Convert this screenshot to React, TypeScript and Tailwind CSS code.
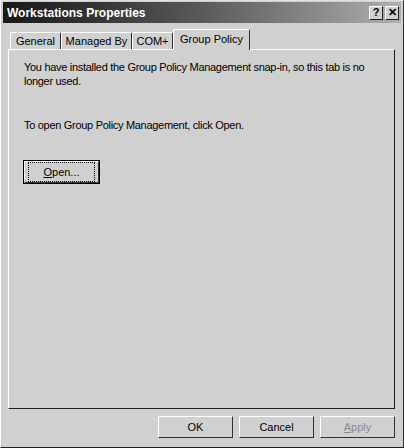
import React from "react";

const font = { fontFamily: '"Liberation Sans", Arial, sans-serif' };

const tabs = [
  { t: "General", w: "w-[51px]" },
  { t: "Managed By", w: "w-[71px]" },
  { t: "COM+", w: "w-[41px]" },
  { t: "Group Policy", w: "w-[77px]" },
];

function TitleButton({ children }: { children: React.ReactNode }) {
  return (
    <div className="w-[14px] h-[14px] bg-[#d0d0d0] border border-t-white border-l-white border-r-[#202020] border-b-[#202020] flex items-center justify-center text-[11px] font-bold leading-none text-black">
      {children}
    </div>
  );
}

function DlgButton({
  label,
  accel,
  disabled,
  focused,
}: {
  label: string;
  accel?: number;
  disabled?: boolean;
  focused?: boolean;
}) {
  const text =
    accel === undefined ? (
      label
    ) : (
      <>
        {label.slice(0, accel)}
        <span className="underline">{label[accel]}</span>
        {label.slice(accel + 1)}
      </>
    );
  return (
    <div
      className={
        "w-[75px] h-[22px] bg-[#d0d0d0] border border-t-white border-l-white border-r-[#303030] border-b-[#303030] flex items-center justify-center text-[11px] " +
        (focused ? "outline outline-1 outline-black " : "") +
        (disabled ? "text-[#8a8a8a]" : "text-black")
      }
    >
      {focused ? (
        <span className="px-[14px] py-[1px] border border-dotted border-black">{text}</span>
      ) : (
        <span>{text}</span>
      )}
    </div>
  );
}

export default function App() {
  return (
    <div style={font} className="w-[404px] h-[448px] bg-[#d0d0d0] flex flex-col border border-t-[#e0e0e0] border-l-white border-r-[#303030] border-b-[#202020] overflow-hidden">
      <div className="h-[21px] mx-[2px] mt-[1px] flex items-center pl-[4px] pr-[2px] bg-gradient-to-r from-[#181818] via-[#5a5a5a] to-[#b0b0b0]">
        <span className="text-white font-bold text-[12px] flex-1">Workstations Properties</span>
        <div className="flex gap-[2px]">
          <TitleButton>?</TitleButton>
          <TitleButton>✕</TitleButton>
        </div>
      </div>

      <div className="flex-1 flex flex-col pl-[7px] pr-[8px] pt-[5px]">
        <div className="flex items-end h-[22px] pl-[2px]">
          {tabs.map(({ t, w }, i) => {
            const sel = i === tabs.length - 1;
            return (
              <div
                key={t}
                className={
                  w +
                  " text-[11px] text-black border-t border-l border-t-white border-l-white border-r border-r-[#303030] rounded-t-[2px] flex items-center justify-center " +
                  (sel ? "h-[21px] relative z-10 bg-[#d0d0d0] pb-[2px]" : "h-[18px]")
                }
              >
                {t}
              </div>
            );
          })}
        </div>
        <div className="h-[360px] -mt-[1px] border border-t-white border-l-white border-r-[#202020] border-b-[#202020] px-[15px] pt-[10px] text-[11px] text-black tracking-[-0.3px]">
          <p className="leading-[14px] whitespace-nowrap">
            You have installed the Group Policy Management snap-in, so this tab is no
            <br />
            longer used.
          </p>
          <p className="mt-[30px] leading-[14px]">To open Group Policy Management, click Open.</p>
          <div className="mt-[29px] tracking-normal">
            <DlgButton label="Open..." accel={0} focused />
          </div>
        </div>
        <div className="flex justify-end gap-[6px] mt-[7px]">
          <DlgButton label="OK" />
          <DlgButton label="Cancel" />
          <DlgButton label="Apply" accel={0} disabled />
        </div>
      </div>
    </div>
  );
}
